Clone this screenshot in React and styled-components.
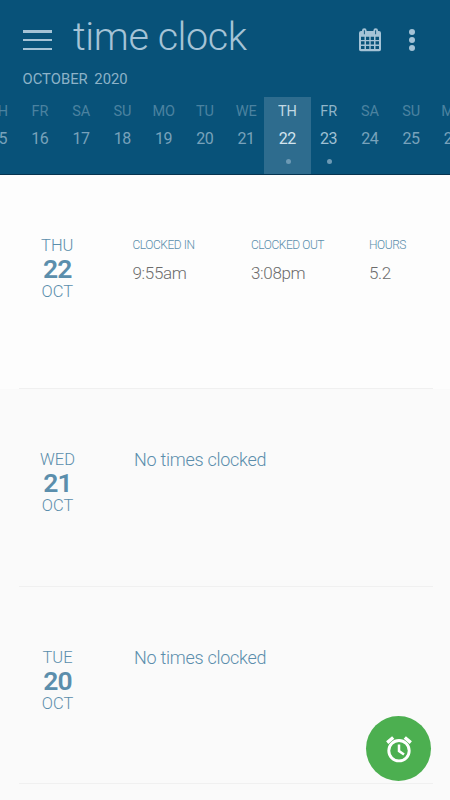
import React from "react";
import styled, { createGlobalStyle } from "styled-components";

const GlobalStyle = createGlobalStyle`
    * {
        box-sizing: border-box;
    }
    body {
        margin: 0;
        background-color: #fafafa;
        font-family: Roboto, "Liberation Sans", sans-serif;
        font-weight: 300;
    }
`

const Screen = styled.div`
    position: relative;
    width: 450px;
    height: 800px;
    overflow: hidden;
`

const Header = styled.header`
    display: flex;
    flex-direction: column;
    height: 175px;
    background-color: #085279;
    border-bottom: 1px solid #063450;
`

const Toolbar = styled.div`
    display: flex;
    align-items: center;
    height: 70px;
    padding: 9px 35px 0 23px;
    color: #a5c3d6;
`

const MenuButton = styled.div`
    display: flex;
    flex-direction: column;
    justify-content: space-between;
    width: 29px;
    height: 20px;
    margin: 1px 21px 0 0;
`

const MenuLine = styled.span`
    height: 2.5px;
    background-color: #a5c3d6;
`

const Title = styled.h1`
    flex: 1;
    margin: 0;
    padding-bottom: 5px;
    font-size: 39.5px;
    font-weight: 300;
    line-height: 46px;
    letter-spacing: -0.4px;
`

const MoreButton = styled.div`
    display: flex;
    flex-direction: column;
    align-items: center;
    gap: 2px;
    width: 6px;
    margin-left: 28px;
`

const MoreDot = styled.span`
    width: 6px;
    height: 6px;
    border-radius: 50%;
    background-color: #a5c3d6;
`

const Month = styled.div`
    height: 27px;
    padding-left: 22.5px;
    color: #8db2c8;
    font-size: 14.8px;
    font-weight: 400;
    line-height: 19px;
    word-spacing: 3px;
`

const DayStrip = styled.div`
    display: flex;
    flex: 1;
    margin-left: -22px;
`

const Day = styled.div`
    display: flex;
    flex: none;
    flex-direction: column;
    align-items: center;
    width: ${props => props.$selected ? "47px" : "41.25px"};
    margin: 0 ${props => props.$selected ? "-2.9px" : "0"};
    padding-top: 5px;
    background-color: ${props => props.$selected ? "#2e6c8e" : "transparent"};
    color: ${props => props.$selected ? "#d4e4ee" : props.$marked ? "#9fc0d3" : "#78a2bb"};
`

const DayName = styled.span`
    font-size: 14.5px;
    font-weight: 400;
    line-height: 20px;
    letter-spacing: -0.2px;
    opacity: ${props => props.$dim ? 0.6 : 0.9};
`

const DayNumber = styled.span`
    margin-top: 6.5px;
    font-size: 16px;
    font-weight: 400;
    line-height: 20px;
    letter-spacing: -0.3px;
`

const DayDot = styled.span`
    width: 5px;
    height: 5px;
    margin: 10.5px 0 0 2px;
    border-radius: 50%;
    background-color: #6d9ab5;
`

const Entry = styled.section`
    display: flex;
    height: ${props => props.$tall ? "214px" : "197.5px"};
    padding: 60px 17px 0 19px;
    background-color: ${props => props.$tall ? "#fdfdfd" : "#fafafa"};
    background-image: linear-gradient(#f0f0f0, #f0f0f0);
    background-repeat: no-repeat;
    background-position: 19px 100%;
    background-size: 414px 1px;
`

const EntryDate = styled.div`
    display: flex;
    flex-direction: column;
    align-items: center;
    width: 77px;
    padding-top: 1px;
    color: #5b8eac;
    font-size: 16.5px;
    line-height: 19px;
`

const EntryNumber = styled.strong`
    margin-top: 1px;
    font-size: 26.5px;
    font-weight: 600;
    line-height: 26px;
    letter-spacing: -0.8px;
`

const Times = styled.div`
    display: grid;
    grid-template-columns: 118.5px 118px 64px;
    align-content: start;
    margin-left: 37px;
`

const TimeLabel = styled.div`
    color: #5b8eac;
    font-size: 12px;
    line-height: 20px;
    letter-spacing: -0.45px;
`

const TimeValue = styled.div`
    margin-top: 5px;
    color: #6c6c6c;
    font-size: 17px;
    line-height: 26px;
    letter-spacing: -0.35px;
`

const EmptyNote = styled.p`
    margin: 0 0 0 38px;
    color: #5b8eac;
    font-size: 18px;
    line-height: 22px;
    letter-spacing: -0.27px;
`

const ClockButton = styled.button`
    position: absolute;
    right: 19px;
    bottom: 19px;
    display: flex;
    align-items: center;
    justify-content: center;
    width: 65px;
    height: 65px;
    padding: 0;
    border: 0;
    border-radius: 50%;
    background-color: #4caf50;
    color: #fff;
`

const days = [
    ["TH", 15], ["FR", 16], ["SA", 17], ["SU", 18], ["MO", 19], ["TU", 20],
    ["WE", 21], ["TH", 22], ["FR", 23], ["SA", 24], ["SU", 25], ["MO", 26],
];

const entries = [
    { day: "THU", date: 22, times: [["CLOCKED IN", "9:55am"], ["CLOCKED OUT", "3:08pm"], ["HOURS", "5.2"]] },
    { day: "WED", date: 21 },
    { day: "TUE", date: 20 },
];

const CalendarIcon = () => (
    <svg width="22" height="24" viewBox="0 0 22 24">
        <path
            fill="currentColor"
            fillRule="evenodd"
            d="M2 3h1V2.500a2.200 2.200 0 0 1 4.600 0V3h6.800V2.500a2.200 2.200 0 0 1 4.600 0V3h1a2 2 0 0 1 2 2v16.500a1.800 1.800 0 0 1-1.800 1.800H1.800A1.800 1.800 0 0 1 0 21.500V5a2 2 0 0 1 2-2zM4.900 2.300v3.900h.9V2.300zM16.200 2.300v3.900h.9V2.300z
            M2 8.700h3.500v3.200H2zM7 8.700h3.300v3.200H7zM11.700 8.700h3.300v3.200h-3.300zM16.500 8.700H20v3.200h-3.500z
            M2 13.300h3.500v3.200H2zM7 13.300h3.300v3.200H7zM11.700 13.300h3.300v3.200h-3.300zM16.500 13.300H20v3.200h-3.500z
            M2 17.900h3.500v3.200H2zM7 17.900h3.300v3.200H7zM11.700 17.900h3.300v3.200h-3.300zM16.500 17.900H20v3.200h-3.500z"
        />
    </svg>
)

const AlarmIcon = () => (
    <svg width="28" height="28" viewBox="0 0 28 28" fill="none" stroke="currentColor">
        <circle cx="14" cy="15.700" r="10.200" strokeWidth="2.900"/>
        <path d="M14 9.600v6.400l5 3.500" strokeWidth="2.500"/>
        <path d="M2.200 7.600l6-5.100M25.800 7.600l-6-5.100" strokeWidth="3.400"/>
    </svg>
)

const DayCell = ({name, number}) => {
    const selected = number === 22;
    const marked = selected || number === 23;
    return (
        <Day $selected={selected} $marked={marked}>
            <DayName $dim={!marked}>{name}</DayName>
            <DayNumber>{number}</DayNumber>
            {marked && <DayDot/>}
        </Day>
    )
}

const App = () => {
    return (
        <Screen>
            <GlobalStyle/>
            <Header>
                <Toolbar>
                    <MenuButton>
                        <MenuLine/>
                        <MenuLine/>
                        <MenuLine/>
                    </MenuButton>
                    <Title>time clock</Title>
                    <CalendarIcon/>
                    <MoreButton>
                        <MoreDot/>
                        <MoreDot/>
                        <MoreDot/>
                    </MoreButton>
                </Toolbar>
                <Month>OCTOBER 2020</Month>
                <DayStrip>
                    {days.map(([name, number]) => <DayCell key={number} name={name} number={number}/>)}
                </DayStrip>
            </Header>
            {entries.map(entry => (
                <Entry key={entry.date} $tall={!!entry.times}>
                    <EntryDate>
                        <span>{entry.day}</span>
                        <EntryNumber>{entry.date}</EntryNumber>
                        <span>OCT</span>
                    </EntryDate>
                    {entry.times ? (
                        <Times>
                            {entry.times.map(([label, value]) => (
                                <div key={label}>
                                    <TimeLabel>{label}</TimeLabel>
                                    <TimeValue>{value}</TimeValue>
                                </div>
                            ))}
                        </Times>
                    ) : (
                        <EmptyNote>No times clocked</EmptyNote>
                    )}
                </Entry>
            ))}
            <ClockButton>
                <AlarmIcon/>
            </ClockButton>
        </Screen>
    )
}

export default App
